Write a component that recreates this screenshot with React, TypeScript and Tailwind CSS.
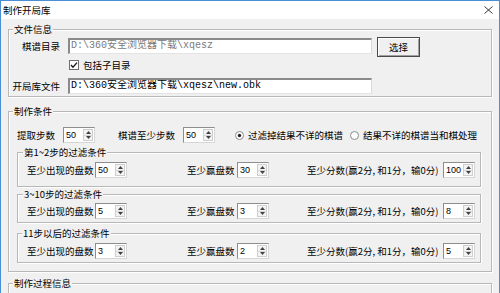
import React from "react";

const F = "font-['Noto_Sans_CJK_SC',sans-serif]";
const MONO = "font-['Liberation_Mono','Noto_Sans_CJK_SC',monospace]";

function Group({
  title,
  className,
  children,
  legendLeft = "left-[4px]",
}: {
  title: string;
  className: string;
  children?: React.ReactNode;
  legendLeft?: string;
}) {
  return (
    <div
      className={`relative border border-[#b8b8b8] shadow-[inset_1px_1px_0_#ffffff,1px_1px_0_#ffffff] ${className}`}
    >
      <span
        className={`absolute -top-[7px] ${legendLeft} bg-[#f0f0f0] px-[1px] text-[9.5px] leading-[12px] text-black whitespace-nowrap`}
      >
        {title}
      </span>
      {children}
    </div>
  );
}

function Spin({ v }: { v: string }) {
  return (
    <div className="flex h-[16px] w-[32px] shrink-0 border border-[#8e8e8e] border-b-[#d6d6d6] border-r-[#d6d6d6] bg-white">
      <div className="flex-1 pl-[2px] text-[9px] leading-[14px] font-['Liberation_Sans',sans-serif] text-black">
        {v}
      </div>
      <div className="my-[1px] mr-[1px] flex w-[10px] flex-col border border-[#cfcfcf] bg-[#f3f3f3]">
        <div className="flex flex-1 items-center justify-center border-b border-[#d8d8d8]">
          <svg width="5" height="3" viewBox="0 0 5 3">
            <path d="M2.5 0 L5 3 L0 3 Z" fill="#404040" />
          </svg>
        </div>
        <div className="flex flex-1 items-center justify-center">
          <svg width="5" height="3" viewBox="0 0 5 3">
            <path d="M0 0 L5 0 L2.5 3 Z" fill="#404040" />
          </svg>
        </div>
      </div>
    </div>
  );
}

function Radio({ checked }: { checked?: boolean }) {
  return (
    <svg width="9" height="9" viewBox="0 0 9 9" className="shrink-0">
      <circle cx="4.5" cy="4.5" r="4" fill="#ffffff" stroke="#8a8a8a" strokeWidth="1" />
      {checked && <circle cx="4.5" cy="4.5" r="1.7" fill="#202020" />}
    </svg>
  );
}

function Field({ text, disabled }: { text: string; disabled?: boolean }) {
  return (
    <div
      className={`h-[16px] w-[304px] shrink-0 border-l-2 border-t-2 border-b border-r border-[#8a8a8a] border-b-[#e4e4e4] border-r-[#dadada] bg-white pl-[1px] text-[10px] leading-[12px] whitespace-nowrap overflow-hidden ${MONO} ${
        disabled ? "text-[#7a7a7a]" : "text-black"
      }`}
    >
      {text}
    </div>
  );
}

function FilterRow({ a, b, c }: { a: string; b: string; c: string }) {
  return (
    <div className="flex h-[16px] items-center pl-[9px] text-[9.5px] leading-[12px] whitespace-nowrap">
      <span className="w-[68px] shrink-0">至少出现的盘数</span>
      <Spin v={a} />
      <span className="ml-[60px] w-[50px] shrink-0">至少赢盘数</span>
      <Spin v={b} />
      <span className="ml-[38px] w-[136px] shrink-0">至少分数(赢2分, 和1分，输0分)</span>
      <Spin v={c} />
    </div>
  );
}

export default function App() {
  return (
    <div
      className={`h-[293px] w-[500px] overflow-hidden border-x border-t border-[#4a8fd6] bg-[#f0f0f0] text-black ${F}`}
    >
      {/* title bar */}
      <div className="flex h-[18px] items-center justify-between bg-white pl-[2px] pr-[6px]">
        <span className="text-[9.5px] leading-[12px]">制作开局库</span>
        <svg width="9" height="8" viewBox="0 0 9 8">
          <path d="M0.5 0.5 L8.5 7.5 M8.5 0.5 L0.5 7.5" stroke="#222" strokeWidth="0.9" fill="none" />
        </svg>
      </div>

      {/* 文件信息 */}
      <Group title="文件信息" className="ml-[7px] mt-[10px] h-[68px] w-[484px]">
        <div className="flex flex-col pt-[7px] text-[9.5px] leading-[12px]">
          <div className="flex items-start">
            <span className="mt-[3px] w-[51px] shrink-0 text-right">棋谱目录</span>
            <div className="ml-[8px] mt-[1px]">
              <Field text="D:\360安全浏览器下载\xqesz" disabled />
            </div>
            <div className="ml-[5px] flex h-[20px] w-[43px] items-center justify-center border border-[#4a4a4a] bg-[#f0f0f0] shadow-[inset_1px_1px_0_#ffffff,inset_-1px_-1px_0_#a0a0a0]">
              选择
            </div>
          </div>
          <div className="mt-[2px] flex h-[12px] items-center pl-[60px]">
            <svg width="10" height="10" viewBox="0 0 10 10" className="shrink-0">
              <rect x="0.5" y="0.5" width="9" height="9" fill="#ffffff" stroke="#6e6e6e" />
              <path d="M2 5 L4 7.2 L8 2.6" stroke="#1a1a1a" strokeWidth="1.4" fill="none" />
            </svg>
            <span className="ml-[4px]">包括子目录</span>
          </div>
          <div className="mt-[7px] flex items-center">
            <span className="w-[51px] shrink-0 text-right">开局库文件</span>
            <div className="ml-[8px]">
              <Field text="D:\360安全浏览器下载\xqesz\new.obk" />
            </div>
          </div>
        </div>
      </Group>

      {/* 制作条件 */}
      <Group title="制作条件" className="ml-[7px] mt-[14px] h-[161px] w-[484px]">
        <div className="flex flex-col pt-[15px]">
          <div className="flex h-[16px] items-center pl-[8px] text-[9.5px] leading-[12px] whitespace-nowrap">
            <span className="w-[46px] shrink-0">提取步数</span>
            <Spin v="50" />
            <span className="ml-[23px] w-[65px] shrink-0">棋谱至少步数</span>
            <Spin v="50" />
            <span className="ml-[20px] flex items-center">
              <Radio checked />
              <span className="ml-[4px] w-[98px]">过滤掉结果不详的棋谱</span>
            </span>
            <span className="ml-[4px] flex items-center">
              <Radio />
              <span className="ml-[4px]">结果不详的棋谱当和棋处理</span>
            </span>
          </div>

          <Group title="第1~2步的过滤条件" className="ml-[8px] mt-[9px] h-[35px] w-[464px]" legendLeft="left-[5px]">
            <div className="pt-[9px]">
              <FilterRow a="50" b="30" c="100" />
            </div>
          </Group>

          <Group title="3~10步的过滤条件" className="ml-[8px] mt-[7px] h-[29px] w-[464px]" legendLeft="left-[5px]">
            <div className="pt-[8px]">
              <FilterRow a="5" b="3" c="8" />
            </div>
          </Group>

          <Group title="11步以后的过滤条件" className="ml-[8px] mt-[10px] h-[30px] w-[464px]" legendLeft="left-[4px]">
            <div className="pt-[9px]">
              <FilterRow a="3" b="2" c="5" />
            </div>
          </Group>
        </div>
      </Group>

      {/* 制作过程信息 */}
      <Group title="制作过程信息" className="ml-[7px] mt-[11px] h-[40px] w-[484px]" />
    </div>
  );
}
